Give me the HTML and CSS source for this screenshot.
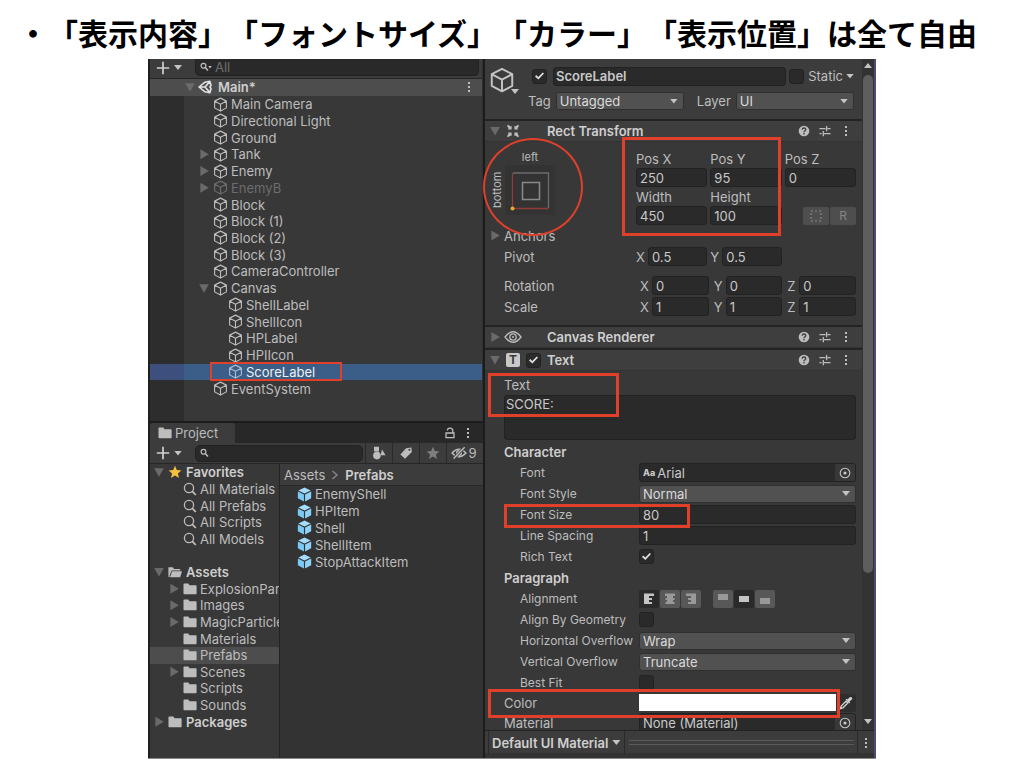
FILE: index.html
```html
<!DOCTYPE html>
<html lang="ja">
<head>
<meta charset="utf-8">
<title>ScoreLabel</title>
<link rel="stylesheet" href="styles.css">
</head>
<body>
<svg class="defs" aria-hidden="true">
  <symbol id="cube" viewBox="0 0 16 16"><path d="M8 1.2 14.3 4.4V11.6L8 15 1.7 11.6V4.4ZM1.9 4.5 8 7.8 14.1 4.5M8 7.8V15" fill="none" stroke="currentColor" stroke-width="1.2" stroke-linejoin="round"/></symbol>
  <symbol id="prefab" viewBox="0 0 16 16"><path d="M8 .6 14.6 3.7 8 7 1.4 3.7Z" fill="#a6dcfb"/><path d="M.9 4.7 7.4 8V15.4L.9 12Z" fill="#7cc9f6"/><path d="M15.1 4.7 8.6 8V15.4L15.1 12Z" fill="#8ed2f8"/></symbol>
  <symbol id="folder" viewBox="0 0 14 14"><path d="M.5 2.2Q.5 1.5 1.2 1.5H5.3L6.5 3.3H13Q13.6 3.3 13.6 4V11.6Q13.6 12.3 13 12.3H1.2Q.5 12.3.5 11.6Z" fill="currentColor"/></symbol>
  <symbol id="folder-open" viewBox="0 0 14 14"><path d="M.4 12V2.3H4.8L6 4H12.2V5.5H3.6L1.6 10.5V12Z" fill="currentColor"/><path d="M4.1 6.3H14L12.2 12.3H2Z" fill="currentColor"/></symbol>
  <symbol id="lens" viewBox="0 0 14 14"><circle cx="6" cy="6" r="4.6" fill="none" stroke="currentColor" stroke-width="1.3"/><path d="M9.3 9.3 12.8 13" stroke="currentColor" stroke-width="1.8"/></symbol>
  <symbol id="seek" viewBox="0 0 12 12"><circle cx="4.5" cy="4.8" r="2.4" fill="none" stroke="currentColor" stroke-width="1.2"/><path d="M6.2 6.6 9 9.6" stroke="currentColor" stroke-width="1.5"/></symbol>
  <symbol id="star" viewBox="0 0 14 14"><path d="M7 .8 8.8 5.1 13.4 5.4 9.9 8.4 11 13 7 10.5 3 13 4.1 8.4.6 5.4 5.2 5.1Z" fill="currentColor"/></symbol>
  <symbol id="plus" viewBox="0 0 14 14"><path d="M7 .8V13.2M.8 7H13.2" stroke="currentColor" stroke-width="1.7"/></symbol>
  <symbol id="dots" viewBox="0 0 4 12"><path d="M1 1h2v2H1ZM1 5h2v2H1ZM1 9h2v2H1Z" fill="currentColor"/></symbol>
  <symbol id="help" viewBox="0 0 12 12"><circle cx="6" cy="6" r="5.3" fill="currentColor"/><path d="M4.2 4.7Q4.3 3 6 3T7.8 4.6Q7.8 5.4 6.9 5.9 6 6.3 6 7.2M6 8.1V9.4" fill="none" stroke="#3e3e3e" stroke-width="1.3"/></symbol>
  <symbol id="preset" viewBox="0 0 12 12"><path d="M.5 3.6H6.5M8.5 3.6H11.5M7.6 1V6.2M.5 8.6H2.6M5 8.6H11.5M4.3 6V11.2" fill="none" stroke="currentColor" stroke-width="1.3"/></symbol>
  <symbol id="picker" viewBox="0 0 12 12"><circle cx="6" cy="6" r="4.8" fill="none" stroke="currentColor" stroke-width="1.1"/><circle cx="6" cy="6" r="1.6" fill="currentColor"/></symbol>
</svg>

<h1 class="title">・「表示内容」「フォントサイズ」「カラー」「表示位置」は全て自由</h1>

<main class="editor">
  <div class="left">
    <section class="hierarchy" aria-label="Hierarchy">
      <div class="toolbar toolbar-top">
        <button class="add" aria-label="Add"><svg class="i14"><use href="#plus"/></svg><i class="tri"></i></button>
        <label class="search"><svg class="i12"><use href="#seek"/></svg><i class="tri tiny"></i><input type="text" placeholder="All" aria-label="Search hierarchy"></label>
      </div>
      <ul class="tree scene">
        <li class="root"><i class="fold open"></i><svg class="i14 lit" viewBox="0 0 14 14"><path d="M11.8 1.2 7 2.2 1 7 7 11.8 11.8 12.8 13 8.7 12 7 13 5.3ZM1.2 7H7M7 7 11.8 1.6M7 7 11.8 12.4" fill="none" stroke="currentColor" stroke-width="1.6" stroke-linejoin="round"/></svg><b>Main*</b><button class="more" aria-label="Scene menu"><svg class="dots"><use href="#dots"/></svg></button></li>
        <li><i class="fold none"></i><svg class="i15"><use href="#cube"/></svg>Main Camera</li>
        <li><i class="fold none"></i><svg class="i15"><use href="#cube"/></svg>Directional Light</li>
        <li><i class="fold none"></i><svg class="i15"><use href="#cube"/></svg>Ground</li>
        <li><i class="fold"></i><svg class="i15"><use href="#cube"/></svg>Tank</li>
        <li><i class="fold"></i><svg class="i15"><use href="#cube"/></svg>Enemy</li>
        <li class="off"><i class="fold"></i><svg class="i15"><use href="#cube"/></svg>EnemyB</li>
        <li><i class="fold none"></i><svg class="i15"><use href="#cube"/></svg>Block</li>
        <li><i class="fold none"></i><svg class="i15"><use href="#cube"/></svg>Block (1)</li>
        <li><i class="fold none"></i><svg class="i15"><use href="#cube"/></svg>Block (2)</li>
        <li><i class="fold none"></i><svg class="i15"><use href="#cube"/></svg>Block (3)</li>
        <li><i class="fold none"></i><svg class="i15"><use href="#cube"/></svg>CameraController</li>
        <li><i class="fold open"></i><svg class="i15"><use href="#cube"/></svg>Canvas</li>
        <li class="deep"><i class="fold none"></i><svg class="i15"><use href="#cube"/></svg>ShellLabel</li>
        <li class="deep"><i class="fold none"></i><svg class="i15"><use href="#cube"/></svg>ShellIcon</li>
        <li class="deep"><i class="fold none"></i><svg class="i15"><use href="#cube"/></svg>HPLabel</li>
        <li class="deep"><i class="fold none"></i><svg class="i15"><use href="#cube"/></svg>HPIIcon</li>
        <li class="deep picked"><i class="fold none"></i><svg class="i15"><use href="#cube"/></svg>ScoreLabel</li>
        <li><i class="fold none"></i><svg class="i15"><use href="#cube"/></svg>EventSystem</li>
      </ul>
    </section>

    <section class="project" aria-label="Project">
      <div class="tabs">
        <button class="tab"><svg class="i14"><use href="#folder"/></svg>Project</button>
        <span class="tab-tools">
          <button aria-label="Lock"><svg class="i12" viewBox="0 0 12 12"><path d="M3.4 3.6Q3.4 1.2 6 1.2T8.8 3.6V6M2 6H10V10.6H2Z" fill="none" stroke="currentColor" stroke-width="1.3"/></svg></button>
          <button aria-label="Project menu"><svg class="dots"><use href="#dots"/></svg></button>
        </span>
      </div>
      <div class="toolbar">
        <button class="add" aria-label="Create"><svg class="i14"><use href="#plus"/></svg><i class="tri"></i></button>
        <label class="search"><svg class="i12"><use href="#seek"/></svg><input type="text" aria-label="Search project"></label>
        <div class="filters">
          <button aria-label="Type filter"><svg class="i14" viewBox="0 0 14 14"><path d="M2 .8H7V5.4H2ZM10 3.5 13.6 9.2H8.6Z" fill="currentColor"/><circle cx="4.9" cy="9.6" r="3.8" fill="currentColor"/></svg></button>
          <button aria-label="Label filter"><svg class="i14" viewBox="0 0 14 14"><path d="M7 2.2 12.4 1.4 12.8 6 6 12.8 1.4 8.4Z" fill="currentColor"/><circle cx="10.4" cy="3.7" r="1" fill="#3c3c3c"/></svg></button>
          <button class="faint" aria-label="Favourite filter"><svg class="i14"><use href="#star"/></svg></button>
          <button class="hidden-count" aria-label="Hidden packages"><svg class="i16" viewBox="0 0 16 14"><path d="M1 7Q8-.6 15 7 8 14.6 1 7Z" fill="none" stroke="currentColor" stroke-width="1.3"/><circle cx="8" cy="7" r="3" fill="currentColor"/><path d="M2.6 12.6 13.6 1.2" stroke="#3c3c3c" stroke-width="3"/><path d="M2.6 12.6 13.6 1.2" stroke="currentColor" stroke-width="1.4"/></svg>9</button>
        </div>
      </div>
      <div class="browser">
        <ul class="tree folders">
          <li class="top"><i class="fold open"></i><svg class="i14 gold"><use href="#star"/></svg><b>Favorites</b></li>
          <li><i class="fold none"></i><svg class="i14"><use href="#lens"/></svg>All Materials</li>
          <li><i class="fold none"></i><svg class="i14"><use href="#lens"/></svg>All Prefabs</li>
          <li><i class="fold none"></i><svg class="i14"><use href="#lens"/></svg>All Scripts</li>
          <li><i class="fold none"></i><svg class="i14"><use href="#lens"/></svg>All Models</li>
          <li class="blank" aria-hidden="true"></li>
          <li class="top"><i class="fold open"></i><svg class="i14"><use href="#folder-open"/></svg><b>Assets</b></li>
          <li><i class="fold"></i><svg class="i14"><use href="#folder"/></svg>ExplosionPart</li>
          <li><i class="fold"></i><svg class="i14"><use href="#folder"/></svg>Images</li>
          <li><i class="fold"></i><svg class="i14"><use href="#folder"/></svg>MagicParticle</li>
          <li><i class="fold none"></i><svg class="i14"><use href="#folder"/></svg>Materials</li>
          <li class="current"><i class="fold none"></i><svg class="i14"><use href="#folder"/></svg>Prefabs</li>
          <li><i class="fold"></i><svg class="i14"><use href="#folder"/></svg>Scenes</li>
          <li><i class="fold none"></i><svg class="i14"><use href="#folder"/></svg>Scripts</li>
          <li><i class="fold none"></i><svg class="i14"><use href="#folder"/></svg>Sounds</li>
          <li class="top"><i class="fold"></i><svg class="i14"><use href="#folder"/></svg><b>Packages</b></li>
        </ul>
        <div class="files">
          <div class="crumbs"><span>Assets</span><svg class="chev" viewBox="0 0 8 10"><path d="M1.5 1 6 5 1.5 9" fill="none" stroke="currentColor" stroke-width="1.4"/></svg><b>Prefabs</b></div>
          <ul class="tree prefabs">
            <li><svg class="i15"><use href="#prefab"/></svg>EnemyShell</li>
            <li><svg class="i15"><use href="#prefab"/></svg>HPItem</li>
            <li><svg class="i15"><use href="#prefab"/></svg>Shell</li>
            <li><svg class="i15"><use href="#prefab"/></svg>ShellItem</li>
            <li><svg class="i15"><use href="#prefab"/></svg>StopAttackItem</li>
          </ul>
        </div>
      </div>
    </section>
  </div>

  <section class="inspector" aria-label="Inspector">
    <div class="scroll">
      <div class="content">
        <div class="object">
          <div class="object-icon"><svg class="i26"><use href="#cube"/></svg><i class="tri"></i></div>
          <div class="object-rows">
            <div class="object-row">
              <input type="checkbox" checked aria-label="Active">
              <input class="field name" type="text" value="ScoreLabel" aria-label="Name">
              <input type="checkbox" id="static"><label class="static" for="static">Static</label><i class="tri"></i>
            </div>
            <div class="object-row tags">
              <label for="tag">Tag</label><span class="drop"><select id="tag"><option>Untagged</option></select></span>
              <label class="layer" for="layer">Layer</label><span class="drop"><select id="layer"><option>UI</option></select></span>
            </div>
          </div>
        </div>

        <header class="comp">
          <span class="comp-icons"><i class="fold open"></i><svg class="i14" viewBox="0 0 14 14"><path d="M1 1.8 2 .8 4.6 2.600 5.600 1.800V5.600H1.800L2.600 4.600ZM13 1.800 12 .8 9.400 2.600 8.400 1.800V5.600H12.200L11.400 4.600ZM1 12.200 2 13.200 4.600 11.400 5.600 12.200V8.400H1.800L2.600 9.400ZM13 12.200 12 13.200 9.400 11.400 8.400 12.200V8.400H12.200L11.400 9.400Z" fill="currentColor"/></svg></span>
          <b>Rect Transform</b>
          <span class="comp-tools"><svg class="i12"><use href="#help"/></svg><svg class="i12"><use href="#preset"/></svg><svg class="dots"><use href="#dots"/></svg></span>
        </header>
        <div class="rect">
          <div class="rect-top">
            <div class="anchor">
              <span class="anchor-x">left</span>
              <span class="anchor-y">bottom</span>
              <svg class="anchor-box" viewBox="0 0 50 50"><path d="M0 0H50V50H0Z" fill="#333"/><path d="M8 8H43.500V43" fill="none" stroke="#6c6c6c" stroke-width="1.300"/><path d="M7.500 8V43.500H43.500" fill="none" stroke="#8f3c3a" stroke-width="1.300"/><path d="M17.500 17.500H34.500V34.500H17.500Z" fill="none" stroke="#8a8a8a" stroke-width="1.500"/><circle cx="7.500" cy="43.500" r="2" fill="#e6ac2e"/></svg>
            </div>
            <div class="rect-grid">
              <label for="px">Pos X</label><label for="py">Pos Y</label><label for="pz">Pos Z</label>
              <input class="field" id="px" type="text" value="250"><input class="field" id="py" type="text" value="95"><input class="field" id="pz" type="text" value="0">
              <label for="w">Width</label><label for="h">Height</label><span></span>
              <input class="field" id="w" type="text" value="450"><input class="field" id="h" type="text" value="100">
              <span class="modes"><button aria-label="Blueprint mode"><svg class="i12" viewBox="0 0 12 12"><path d="M1 1H11V11H1Z" fill="none" stroke="currentColor" stroke-width="1.200" stroke-dasharray="2 2"/></svg></button><button>R</button></span>
            </div>
          </div>
          <div class="prop"><span class="anchors"><i class="fold"></i>Anchors</span></div>
          <div class="prop"><span>Pivot</span>
            <div class="axes">
              <label>X<input class="field" type="text" value="0.5"></label><label>Y<input class="field" type="text" value="0.5"></label>
            </div>
          </div>
          <div class="prop spaced"><span>Rotation</span>
            <div class="axes inset">
              <label>X<input class="field" type="text" value="0"></label><label>Y<input class="field" type="text" value="0"></label><label>Z<input class="field" type="text" value="0"></label>
            </div>
          </div>
          <div class="prop"><span>Scale</span>
            <div class="axes inset">
              <label>X<input class="field" type="text" value="1"></label><label>Y<input class="field" type="text" value="1"></label><label>Z<input class="field" type="text" value="1"></label>
            </div>
          </div>
        </div>

        <header class="comp">
          <span class="comp-icons"><i class="fold"></i><svg class="i18" viewBox="0 0 18 14"><path d="M1 7Q9-3.500 17 7 9 17.500 1 7Z" fill="none" stroke="currentColor" stroke-width="1.300"/><circle cx="9" cy="7" r="3.200" fill="none" stroke="currentColor" stroke-width="1.300"/><circle cx="9" cy="7" r="1" fill="currentColor"/></svg></span>
          <b>Canvas Renderer</b>
          <span class="comp-tools"><svg class="i12"><use href="#help"/></svg><svg class="i12"><use href="#preset"/></svg><svg class="dots"><use href="#dots"/></svg></span>
        </header>

        <header class="comp">
          <span class="comp-icons"><i class="fold open"></i><span class="t-icon">T</span><input type="checkbox" checked aria-label="Text enabled"></span>
          <b>Text</b>
          <span class="comp-tools"><svg class="i12"><use href="#help"/></svg><svg class="i12"><use href="#preset"/></svg><svg class="dots"><use href="#dots"/></svg></span>
        </header>
        <div class="text-body">
          <label class="text-label" for="text">Text</label>
          <textarea class="field" id="text">SCORE:</textarea>
          <div class="prop"><b>Character</b></div>
          <div class="prop sub"><span>Font</span><button class="field object-field"><span class="aa">Aa</span>Arial<span class="pick"><svg class="i12"><use href="#picker"/></svg></span></button></div>
          <div class="prop sub"><label for="style">Font Style</label><span class="drop"><select id="style"><option>Normal</option></select></span></div>
          <div class="prop sub"><label for="size">Font Size</label><input class="field" id="size" type="text" value="80"></div>
          <div class="prop sub"><label for="spacing">Line Spacing</label><input class="field" id="spacing" type="text" value="1"></div>
          <div class="prop sub"><label for="rich">Rich Text</label><input type="checkbox" id="rich" checked></div>
          <div class="prop"><b>Paragraph</b></div>
          <div class="prop sub"><span>Alignment</span>
            <div class="align">
              <span class="group">
                <button class="on" aria-label="Left"><svg class="i12" viewBox="0 0 12 12"><path d="M1 .5H11V3H1ZM1 3H6V5H1ZM1 5H9V7H1ZM1 7H6V9H1ZM1 9H9V11H1Z" fill="currentColor"/></svg></button>
                <button aria-label="Center"><svg class="i12" viewBox="0 0 12 12"><path d="M1 .5H11V3H1ZM3 3H9V5H3ZM1.500 5H10.500V7H1.500ZM3 7H9V9H3ZM1.500 9H10.500V11H1.500Z" fill="currentColor"/></svg></button>
                <button aria-label="Right"><svg class="i12" viewBox="0 0 12 12"><path d="M1 .5H11V3H1ZM6 3H11V5H6ZM3 5H11V7H3ZM6 7H11V9H6ZM3 9H11V11H3Z" fill="currentColor"/></svg></button>
              </span>
              <span class="group">
                <button aria-label="Top"><svg class="i12" viewBox="0 0 12 12"><path d="M1 1H11V7H1Z" fill="currentColor"/></svg></button>
                <button class="on" aria-label="Middle"><svg class="i12" viewBox="0 0 12 12"><path d="M1 3H11V9H1Z" fill="currentColor"/></svg></button>
                <button aria-label="Bottom"><svg class="i12" viewBox="0 0 12 12"><path d="M1 5H11V11H1Z" fill="currentColor"/></svg></button>
              </span>
            </div>
          </div>
          <div class="prop sub"><label for="geo">Align By Geometry</label><input type="checkbox" id="geo"></div>
          <div class="prop sub"><label for="ho">Horizontal Overflow</label><span class="drop"><select id="ho"><option>Wrap</option></select></span></div>
          <div class="prop sub"><label for="vo">Vertical Overflow</label><span class="drop"><select id="vo"><option>Truncate</option></select></span></div>
          <div class="prop sub"><label for="fit">Best Fit</label><input type="checkbox" id="fit"></div>
          <div class="prop short"><span>Color</span>
            <div class="color"><button class="swatch" aria-label="Color"></button><button class="dropper" aria-label="Pick color"><svg class="i14" viewBox="0 0 14 14"><path d="M1.500 12.500 2.200 10 7 5.200 8.800 7 4 11.800Z" fill="none" stroke="currentColor" stroke-width="1.300"/><path d="M6.600 3.600 7.800 2.800 8.600 3.600 10.400 1.400Q11.800.4 12.900 1.500T12.600 3.800L10.400 5.500 11.200 6.300 10.300 7.400Z" fill="currentColor"/></svg></button></div>
          </div>
          <div class="prop"><span>Material</span><button class="field object-field">None (Material)<span class="pick"><svg class="i12"><use href="#picker"/></svg></span></button></div>
        </div>
      </div>
      <div class="bar" aria-hidden="true"><i class="tri up"></i><div class="track"><div class="thumb"></div></div><i class="tri"></i></div>
    </div>
    <footer class="preview">
      <button class="preview-name">Default UI Material<i class="tri"></i></button>
      <span class="grip"></span>
      <button class="preview-more" aria-label="Preview menu"><svg class="dots"><use href="#dots"/></svg></button>
    </footer>
  </section>

  <div class="mark mark-item"></div>
  <div class="mark mark-anchor"></div>
  <div class="mark mark-rect"></div>
  <div class="mark mark-text"></div>
  <div class="mark mark-size"></div>
  <div class="mark mark-color"></div>
</main>
</body>
</html>
```
FILE: styles.css
```css
* { box-sizing: border-box; }

body {
  margin: 0;
  padding: 0 148px 9px;
  min-height: 100vh;
  display: flex;
  flex-direction: column;
  background: #fff;
  color: #bdbdbd;
  font: 13px/16px Inter, "Noto Sans CJK JP", sans-serif;
}

button, input, select, textarea {
  margin: 0;
  padding: 0;
  border: 0;
  background: none;
  color: inherit;
  font: inherit;
}
button { display: flex; align-items: center; justify-content: center; }
b { font-weight: 600; color: #cfcfcf; }
ul { list-style: none; margin: 0; padding: 0; }
svg { display: block; flex: none; }

.defs { position: absolute; width: 0; height: 0; }
.i12 { width: 12px; height: 12px; }
.i14 { width: 14px; height: 14px; }
.i15 { width: 15px; height: 15px; }
.i16 { width: 16px; height: 14px; }
.i18 { width: 18px; height: 14px; }
.i26 { width: 26px; height: 26px; }
.dots { width: 4px; height: 12px; }
.lit { color: #e2e2e2; }
.gold { color: #f5c040; }

.title {
  margin: 0 -130px;
  height: 59px;
  padding-top: 10px;
  color: #000;
  font: 700 30px/44px "Noto Sans CJK JP", sans-serif;
  white-space: nowrap;
  text-spacing-trim: space-all;
}

/* Triangles */
.tri {
  flex: none;
  width: 8px;
  height: 5px;
  background: #c4c4c4;
  clip-path: polygon(0 0, 100% 0, 50% 100%);
}
.tri.up { clip-path: polygon(50% 0, 100% 100%, 0 100%); }
.tri.tiny { width: 4px; height: 3px; margin-left: -5px; }
.fold {
  flex: none;
  width: 12px;
  height: 10px;
  background: #6a6a6a;
  clip-path: polygon(20% 0, 90% 50%, 20% 100%);
}
.fold.open { clip-path: polygon(10% 10%, 90% 10%, 50% 95%); }
.fold.none { visibility: hidden; }

/* Editor frame */
.editor {
  position: relative;
  flex: 1;
  display: grid;
  grid-template-columns: 335px 1fr;
  background: #383838;
  border-bottom: 1px solid #8a8a8a;
}
.left {
  display: flex;
  flex-direction: column;
  min-width: 0;
  border-left: 2px solid #1f1f1f;
}

.toolbar {
  display: flex;
  align-items: center;
  height: 21px;
  background: #3c3c3c;
  border-bottom: 1px solid #262626;
}
.toolbar-top { height: 20px; padding-bottom: 2px; }
.toolbar-top .search { border-top: 0; border-radius: 0 0 5px 5px; margin-right: 3px; }
.toolbar .add { gap: 4px; width: 45px; padding-right: 7px; color: #d0d0d0; }
.search {
  flex: 1;
  display: flex;
  align-items: center;
  gap: 2px;
  min-width: 0;
  height: 17px;
  padding-left: 3px;
  background: #292929;
  border: 1px solid #222;
  border-radius: 5px;
}
.search input { flex: 1; min-width: 0; outline: 0; padding-left: 1px; }
.search input::placeholder { color: #6e6e6e; opacity: 1; }

.tree { display: grid; grid-auto-rows: 1fr; }
.tree li {
  display: flex;
  align-items: center;
  min-width: 0;
  white-space: nowrap;
}

/* Hierarchy */
.hierarchy { height: 362px; border-right: 1px solid #303030; background: linear-gradient(90deg, #2d2d2d 34px, #383838 34px); }
.scene { height: 318px; }
.scene li { padding-left: 48px; gap: 3px; }
.scene li.deep { padding-left: 63px; }
.scene li.root { padding-left: 34px; gap: 2px; background: #4d4d4d; }
.root b { padding-left: 4px; }
.scene li.off { color: #6c6c6c; }
.scene li.picked { color: #f0f0f0; background: linear-gradient(90deg, #3d4f7c 34px, #3a5e87 34px); }
.scene li.picked svg { color: #a9bccf; }
.more { margin-left: auto; padding-right: 11px; }

/* Project */
.project { flex: 1; display: flex; flex-direction: column; border-top: 2px solid #1c1c1c; min-height: 0; }
.tabs { display: flex; justify-content: space-between; height: 20px; background: #282828; }
.tab { gap: 3px; padding: 0 17px 0 8px; background: #3c3c3c; border-radius: 3px 3px 0 0; }
.tab-tools { display: flex; align-items: center; gap: 10px; padding-right: 13px; }
.filters { display: flex; align-self: stretch; padding: 0 2px; }
.filters button { width: 27px; border-left: 1px solid #2a2a2a; }
.filters .hidden-count { width: 35px; gap: 1px; }
.filters .faint { color: #7e7e7e; }

.browser { flex: 1; display: grid; grid-template-columns: 129px 1fr; min-height: 0; }
.folders { height: 266px; overflow: hidden; }
.folders li { padding-left: 18px; gap: 3px; overflow: hidden; }
.folders li.top { padding-left: 3px; }
.folders li.top b { padding-left: 1px; }
.folders li.current { background: #4d4d4d; }
.files { background: #333; border-left: 1px solid #232323; }
.crumbs {
  display: flex;
  align-items: center;
  gap: 6px;
  height: 22px;
  padding-left: 4px;
  background: #3c3c3c;
  border-bottom: 1px solid #292929;
}
.chev { width: 8px; height: 10px; color: #888; }
.prefabs { height: 84px; }
.prefabs li { padding-left: 17px; gap: 3px; }

/* Inspector */
.inspector {
  display: flex;
  flex-direction: column;
  min-width: 0;
  border-left: 2px solid #1c1c1c;
  border-right: 2px solid #4c4a78;
}
.scroll { flex: 1 1 0; display: flex; min-height: 0; overflow: hidden; border-bottom: 1px solid #232323; }
.content { flex: 1; min-width: 0; }
.bar {
  display: flex;
  flex-direction: column;
  align-items: center;
  width: 12px;
  padding: 4px 0 6px;
  background: #333;
}
.track { flex: 1; width: 10px; padding: 7px 0; margin-bottom: 6px; }
.thumb { height: 79%; border-radius: 5px; background: #5e5e5e; }

.field {
  width: 100%;
  min-width: 0;
  height: 19px;
  padding: 0 3px;
  background: #2a2a2a;
  border: 1px solid #222;
  border-radius: 3px;
  color: #c8c8c8;
  outline: 0;
}
input[type="checkbox"] {
  appearance: none;
  flex: none;
  display: grid;
  place-items: center;
  width: 15px;
  height: 15px;
  background: #2a2a2a;
  border: 1px solid #222;
  border-radius: 3px;
}
input[type="checkbox"]:checked::before {
  content: "";
  width: 9px;
  height: 8px;
  background: #dedede;
  clip-path: polygon(0 55%, 14% 38%, 36% 62%, 86% 5%, 100% 18%, 38% 95%);
}
.drop { display: grid; align-items: center; min-width: 0; }
.drop select {
  grid-area: 1 / 1;
  appearance: none;
  width: 100%;
  height: 18px;
  padding: 0 3px;
  background: #515151;
  border: 1px solid #303030;
  border-radius: 3px;
  color: #dadada;
  outline: 0;
}
.drop::after {
  content: "";
  grid-area: 1 / 1;
  justify-self: end;
  margin-right: 6px;
  width: 8px;
  height: 5px;
  background: #c4c4c4;
  clip-path: polygon(0 0, 100% 0, 50% 100%);
  pointer-events: none;
}

.object { display: flex; height: 60px; padding: 7px 8px 0 4px; background: #3c3c3c; }
.object-icon { display: flex; align-items: center; width: 39px; height: 28px; color: #c4c4c4; }
.object-icon .tri { align-self: flex-end; margin-left: -4px; }
.object-rows { flex: 1; min-width: 0; }
.object-row { display: flex; align-items: center; height: 20px; padding-left: 4px; gap: 3px; }
.object-row .name { flex: 1; margin-left: 3px; padding: 0 2px; font-weight: 600; }
.object-row .static { padding-left: 1px; }
.object-row.tags { height: 30px; padding-left: 0; gap: 5px; }
.tags .drop:nth-of-type(1) { flex: 129; }
.tags .drop:nth-of-type(2) { flex: 119; }
.layer { padding-left: 8px; }

.comp {
  display: grid;
  grid-template-columns: 58px 1fr auto;
  align-items: center;
  height: 23px;
  padding: 0 14px 0 4px;
  background: #3e3e3e;
  border-top: 2px solid #232323;
  border-bottom: 1px solid #333;
}
.comp-icons { display: flex; align-items: center; gap: 5px; }
.comp-icons .i18 { margin-left: -2px; }
.comp-tools { display: flex; align-items: center; gap: 9px; }
.comp-tools .dots { margin-left: 4px; }
.t-icon {
  flex: none;
  width: 14px;
  height: 14px;
  margin-right: 1px;
  border-radius: 2px;
  background: #c8c8c8;
  color: #3a3a3a;
  font-weight: 700;
  font-size: 12px;
  line-height: 14px;
  text-align: center;
}

.rect { padding: 7px 6px 8px 4px; }
.rect-top { display: grid; grid-template-columns: 1fr 220px; }
.anchor {
  display: grid;
  grid-template-columns: 16px 50px;
  grid-template-rows: 16px 50px;
  justify-content: start;
  font-size: 11px;
}
.anchor-x { grid-column: 2; text-align: center; }
.anchor-y { writing-mode: vertical-rl; transform: rotate(180deg); text-align: center; }
.anchor-box { width: 50px; height: 50px; }
.rect-grid { display: grid; grid-template-columns: repeat(3, 1fr); grid-auto-rows: 19px; column-gap: 3px; align-items: center; }
.modes { display: flex; gap: 1px; justify-content: flex-end; }
.modes button { width: 26px; height: 18px; background: #4e4e4e; color: #858585; border-radius: 2px; font-size: 12px; }

.prop {
  display: grid;
  grid-template-columns: 135px 1fr;
  align-items: center;
  height: 21px;
  white-space: nowrap;
}
.rect .prop { padding-left: 15px; grid-template-columns: 132px 1fr; }
.prop.sub > :first-child { padding-left: 16px; font-size: 12px; }
.prop.spaced { margin-top: 8px; }
.prop.short { height: 19px; }
.anchors { display: flex; align-items: center; gap: 3px; margin-left: -15px; }
.axes { display: grid; grid-template-columns: repeat(3, 1fr); column-gap: 3px; }
.axes.inset { padding-left: 4px; column-gap: 5px; }
.axes label { display: grid; grid-template-columns: 12px 1fr; align-items: center; }

.text-body { padding: 5px 6px 0 19px; }
.text-label { display: block; height: 19px; line-height: 19px; }
textarea.field { display: block; height: 45px; margin-bottom: 1px; resize: none; line-height: 17px; padding: 0 1px; }
.object-field { justify-content: flex-start; padding: 0 0 0 3px; overflow: hidden; }
.aa { margin-right: 2px; font-size: 9px; font-weight: 800; }
.pick { display: flex; align-items: center; margin-left: auto; height: 17px; padding: 0 4px; background: #383838; }
.align { display: flex; gap: 12px; }
.group { display: flex; gap: 1px; }
.group button { width: 20px; height: 18px; background: #585858; color: #999; border-radius: 2px; }
.group .on { background: #2a2a2a; color: #c4c4c4; }
.color { display: flex; align-items: center; }
.swatch { flex: 1; height: 17px; background: #fff; }
.dropper { width: 20px; height: 18px; background: #2e2e2e; border-radius: 3px; color: #d4d4d4; }

.preview { display: flex; height: 27px; padding: 0 0 4px 3px; background: #3c3c3c; box-shadow: inset 0 -5px #333; }
.preview-name { gap: 4px; padding: 0 4px 0 3px; border-left: 1px solid #2a2a2a; border-right: 1px solid #2a2a2a; font-weight: 600; color: #cfcfcf; }
.grip { flex: 1; align-self: center; height: 5px; margin: 0 3px 0 4px; border: solid #5a5a5a; border-width: 1px 0; }
.preview-more { width: 17px; border-left: 1px solid #2a2a2a; }

/* Red annotations drawn over the editor */
.mark { position: absolute; border: 2px solid #e0402a; pointer-events: none; }
.mark-item { left: 62px; top: 303px; width: 132px; height: 19px; }
.mark-anchor { left: 335px; top: 79px; width: 100px; height: 98px; border-radius: 50%; }
.mark-rect { left: 474px; top: 78px; width: 159px; height: 99px; border-width: 3px; }
.mark-text { left: 340px; top: 314px; width: 131px; height: 44px; border-width: 3px; }
.mark-size { left: 356px; top: 445px; width: 186px; height: 24px; border-width: 3px; }
.mark-color { left: 340px; top: 630px; width: 352px; height: 29px; border-width: 3px; }
```
